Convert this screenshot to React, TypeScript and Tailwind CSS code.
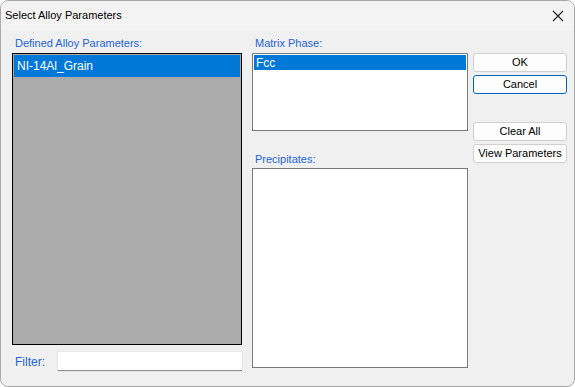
import React from 'react';

function Btn({ label, focused }: { label: string; focused?: boolean }) {
  return (
    <button
      className={
        focused
          ? 'block h-[19px] w-full rounded-[3px] border border-[#0067c0] bg-[#fdfdfd] text-[11px] leading-none text-black'
          : 'block h-[19px] w-full rounded-[3px] border border-[#d0d0d0] bg-[#fdfdfd] text-[11px] leading-none text-black'
      }
    >
      {label}
    </button>
  );
}

export default function App() {
  return (
    <div
      className="h-[387px] w-[575px] overflow-hidden rounded-[8px] border border-[#a9a9a9] bg-[#f0f0f0]"
      style={{ fontFamily: '"Liberation Sans", Arial, sans-serif' }}
    >
      {/* title bar */}
      <div className="flex h-[29px] items-center justify-between bg-[#f3f3f3] pl-[4px] pr-[10px]">
        <span className="text-[11px] text-black">Select Alloy Parameters</span>
        <svg width="12" height="12" viewBox="0 0 12 12" className="mt-[1px]">
          <path d="M1 1 L11 11 M11 1 L1 11" stroke="#1a1a1a" strokeWidth="1.1" />
        </svg>
      </div>

      <div className="flex pl-[11px] pt-[6px]">
        {/* left column */}
        <div className="flex w-[230px] flex-col">
          <div className="h-[17px] pl-[3px] text-[11px] leading-[14px] text-[#1f63d6]">
            Defined Alloy Parameters:
          </div>
          <div className="h-[292px] border border-black bg-[#ababab] px-[1px] pt-[1px]">
            <div className="flex h-[22px] items-center bg-[#0078d7] pl-[3px] text-[12px] text-white">
              NI-14Al_Grain
            </div>
          </div>
          <div className="mt-[7px] flex items-center">
            <span className="w-[46px] pl-[3px] text-[12px] text-[#1f63d6]">Filter:</span>
            <div className="h-[19px] flex-1 border-b border-[#8e8e8e] bg-white shadow-[0_0_0_1px_#e6e6e6]" />
          </div>
        </div>

        {/* middle column */}
        <div className="ml-[10px] flex w-[216px] flex-col">
          <div className="h-[17px] pl-[3px] text-[11px] leading-[14px] text-[#1f63d6]">Matrix Phase:</div>
          <div className="h-[78px] border border-[#7a7a7a] bg-white px-[1px] pt-[1px]">
            <div className="flex h-[15px] items-center bg-[#0078d7] pl-[2px] text-[12px] text-white">Fcc</div>
          </div>
          <div className="mt-[21px] h-[16px] pl-[3px] text-[11px] leading-[14px] text-[#1f63d6]">
            Precipitates:
          </div>
          <div className="h-[200px] border border-[#7a7a7a] bg-white" />
        </div>

        {/* buttons */}
        <div className="ml-[5px] flex w-[94px] flex-col gap-[3px] pt-[17px]">
          <Btn label="OK" />
          <Btn label="Cancel" focused />
          <div className="h-[22px]" />
          <Btn label="Clear All" />
          <Btn label="View Parameters" />
        </div>
      </div>
    </div>
  );
}
